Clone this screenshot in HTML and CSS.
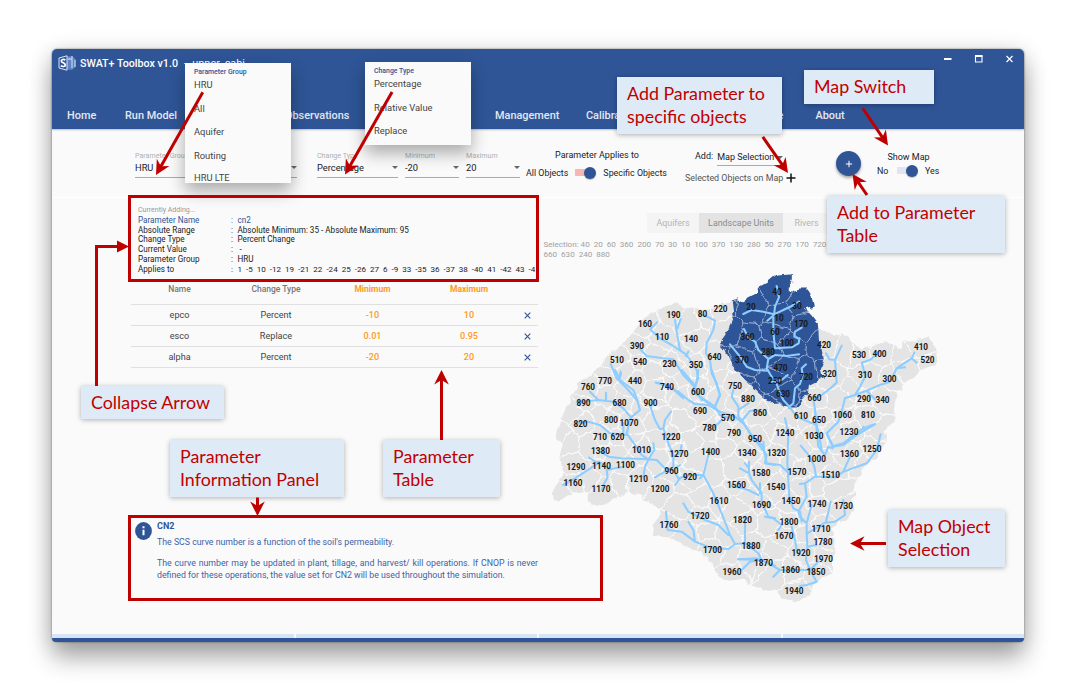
FILE: index.html
```html
<!DOCTYPE html>
<html lang="en">
<head>
<meta charset="utf-8">
<title>SWAT+ Toolbox v1.0</title>
<link rel="stylesheet" href="styles.css">
</head>
<body>
<div class="window">
  <header class="header">
    <div class="titlebar">
      <svg class="logo" width="19" height="16" viewBox="0 0 19 16">
        <path d="M9 1.5 14 1l3.5 3v8L14 15l-5-.5" fill="#5f83c4"/>
        <path d="M10 4h4v9M17 5v7M14 1v3" fill="none" stroke="#b9cbed" stroke-width="1.3"/>
        <path d="M1 3 9 .8v14.4L1 13Z" fill="#2f5597" stroke="#dbe5f7" stroke-width="1"/>
        <path d="M7.3 5.2C6 4 3.3 4.200 3.300 6c0 2 4 1.700 4 3.900 0 2-3 2-4.500.700" fill="none" stroke="#fff" stroke-width="1.700"/>
      </svg>
      <span class="app-name">SWAT+ Toolbox v1.0</span>
      <span class="project">-&nbsp; upper_cabi</span>
      <svg class="controls" width="68" height="12" viewBox="0 0 68 12" fill="none" stroke="#fff">
        <path d="M0 6h7.500" stroke-width="2"/>
        <path d="M31.500 3h6.500v6h-6.500z" stroke-width="1.100"/><path d="M31 3h7.500" stroke-width="2"/>
        <path d="m62.500 3 6 6m0-6-6 6" stroke-width="1.200"/>
      </svg>
    </div>
    <nav class="nav">
      <span class="n-home">Home</span><span class="n-run">Run Model</span><span class="n-obs">Observations</span><span class="n-man">Management</span><span class="n-cal">Calibra</span><span class="n-e">e</span><span>About</span>
    </nav>
  </header>

  <section class="toolbar">
    <div class="field f-group"><label>Parameter Group</label><div class="value">HRU<i class="caret"></i></div></div>
    <div class="field f-type"><label>Change Type</label><div class="value">Percentage<i class="caret"></i></div></div>
    <div class="field f-num"><label>Minimum</label><div class="value">-20<i class="caret"></i></div></div>
    <div class="field f-num"><label>Maximum</label><div class="value">20<i class="caret"></i></div></div>
    <div class="applies">
      <div>Parameter Applies to</div>
      <div class="switch-row"><span>All Objects</span><i class="switch pink"></i><span>Specific Objects</span></div>
    </div>
    <div class="adder">
      <div class="add-row"><span>Add:</span><div class="select">Map Selection<i class="caret"></i></div></div>
      <div class="sel-row"><span>Selected Objects on Map</span><svg width="10" height="10" viewBox="0 0 10 10"><path d="M5 .5v9M.5 5h9" stroke="#111" stroke-width="1.500"/></svg></div>
    </div>
    <div class="fab"><svg width="8" height="8" viewBox="0 0 8 8"><path d="M4 .8v6.400M.8 4h6.400" stroke="#fff"/></svg></div>
    <div class="show-map">
      <div>Show Map</div>
      <div class="switch-row"><span>No</span><i class="switch"></i><span>Yes</span></div>
    </div>
  </section>

  <main class="content">
    <div class="left">
      <section class="adding">
        <p class="hint">Currently Adding...</p>
        <dl>
          <dt class="blue">Parameter Name</dt><dd class="blue">cn2</dd>
          <dt>Absolute Range</dt><dd>Absolute Minimum: 35 - Absolute Maximum: 95</dd>
          <dt>Change Type</dt><dd>Percent Change</dd>
          <dt>Current Value</dt><dd>&nbsp;-</dd>
          <dt>Parameter Group</dt><dd>HRU</dd>
          <dt>Applies to</dt><dd class="ids">1 &nbsp;-5 &nbsp;10 &nbsp;-12 &nbsp;19 &nbsp;-21 &nbsp;22 &nbsp;-24 &nbsp;25 &nbsp;-26 &nbsp;27 &nbsp;6 &nbsp;-9 &nbsp;33 &nbsp;-35 &nbsp;36 &nbsp;-37 &nbsp;38 &nbsp;-40 &nbsp;41 &nbsp;-42 &nbsp;43 &nbsp;-4</dd>
        </dl>
      </section>
      <section class="table">
        <div class="row head"><span>Name</span><span>Change Type</span><b>Minimum</b><b>Maximum</b><span></span></div>
        <div class="row"><span>epco</span><span>Percent</span><b>-10</b><b>10</b><svg class="del" viewBox="0 0 7 7"><path d="m.7.7 5.600 5.600m0-5.600L.7 6.300"/></svg></div>
        <div class="row"><span>esco</span><span>Replace</span><b>0.01</b><b>0.95</b><svg class="del" viewBox="0 0 7 7"><path d="m.7.7 5.600 5.600m0-5.600L.7 6.300"/></svg></div>
        <div class="row"><span>alpha</span><span>Percent</span><b>-20</b><b>20</b><svg class="del" viewBox="0 0 7 7"><path d="m.7.7 5.600 5.600m0-5.600L.7 6.300"/></svg></div>
      </section>
      <section class="info">
        <svg width="17" height="18" viewBox="0 0 17 18"><ellipse cx="8.500" cy="9" rx="8.400" ry="9" fill="#2f5597"/><path d="M8.500 4.300v2M8.500 7.700v5.600" stroke="#fff" stroke-width="2"/></svg>
        <div class="info-text">
          <h2>CN2</h2>
          <p>The SCS curve number is a function of the soil's permeability.</p>
          <p class="just">The curve number may be updated in plant, tillage, and harvest/ kill operations. If CNOP is never</p>
          <p class="second">defined for these operations, the value set for CN2 will be used throughout the simulation.</p>
        </div>
      </section>
    </div>

    <div class="right">
      <div class="tabs"><span>Aquifers</span><span class="on">Landscape Units</span><span>Rivers</span></div>
      <p class="selection">Selection: 40 &nbsp;20 &nbsp;60 &nbsp;360 &nbsp;200 &nbsp;70 &nbsp;30 &nbsp;10 &nbsp;100 &nbsp;370 &nbsp;130 &nbsp;280 &nbsp;50 &nbsp;270 &nbsp;170 &nbsp;720<br>660 &nbsp;630 &nbsp;240 &nbsp;880</p>
      <svg class="map" width="400" height="345" viewBox="540 262 400 345">
        <defs>
          <clipPath id="basin-clip"><use href="#basin"/></clipPath>
          <clipPath id="upper-clip"><use href="#upper"/></clipPath>
          <filter id="rough" x="-2%" y="-2%" width="104%" height="104%">
            <feTurbulence type="fractalNoise" baseFrequency=".11" numOctaves="2" seed="4"/>
            <feDisplacementMap in="SourceGraphic" scale="7" xChannelSelector="R" yChannelSelector="G"/>
          </filter>
        </defs>
        <g filter="url(#rough)" transform="translate(.8 .6)">
          <path id="basin" class="land" d="M731 301 720 303 714 309 705 308 697 309 690 306 683 307 680 305 674 302 668 306 658 308 650 313 641 320 634 330 627 338 620 346 610 352 604 360 598 368 590 376 583 379 577 383 577 388 568 400 565 408 561 417 557 425 555 435 559 442 562 446 559 453 558 460 563 467 561 477 554 487 552 492 553 500 565 497 573 493 582 492 588 495 588 503 608 504 612 498 622 497 628 490 642 495 643 500 657 505 660 513 653 525 652 535 668 537 678 542 688 547 700 552 712 562 712 570 722 580 738 578 755 585 763 590 777 588 780 598 798 601 810 592 813 583 825 575 832 572 833 533 829 528 850 517 854 510 849 498 854 496 855 478 867 463 878 457 885 440 883 432 895 420 893 407 897 393 907 380 920 370 937 362 933 343 928 336 913 340 903 340 902 348 897 348 892 343 887 340 877 345 860 347 852 343 843 333 838 335 827 332 817 327 790 300Z"/>
          <g id="cells" class="cells" clip-path="url(#basin-clip)"></g>
          <path id="upper" class="upper" d="M731 301 737 299 742 301 757 293 757 287 768 281 775 275 791 274 791 280 787 287 787 292 800 288 806 288 811 295 813 306 803 309 810 313 817 322 818 337 820 350 824 358 820 368 822 378 808 385 807 393 795 407 787 407 777 401 768 402 753 388 742 378 730 363 725 350 718 342 728 328 733 317Z"/>
          <g id="upper-cells" class="cells upper-lines" clip-path="url(#upper-clip)"></g>
        </g>
        <g class="streams">
          <path transform="translate(700 260) scale(.33333)" d="M230 78 237 112 225 140 222 165M130 162 155 150 190 155 222 163 250 150 275 138 297 125M222 165 202 182M220 165V215L225 265M305 203 285 215 283 230 298 237 296 250 275 262 228 265M132 207 145 232 165 245 175 270 205 297M90 253 120 290 140 320 165 330 205 332M297 283 260 288 225 285 205 297 200 325 212 345 230 372 240 400 250 420 268 440 290 470 320 483 350 495M263 345 245 360 215 365M318 313 305 325 308 345 300 372 285 385 280 430 268 440M0 162 22 170 45 182 40 210 20 250 18 280 30 300 35 340 50 370 60 405 45 440M378 280 388 298 405 300 425 257M405 300 408 340 410 367 395 382 365 405 340 415 345 450 350 495 358 530 365 570M411 367 395 382M537 275 510 300 485 308 490 325 495 350 480 380 465 405 435 415 425 455 415 485 380 520 400 560M465 405 500 392 540 375 570 365 590 325 635 295 643 278M635 295 650 308M590 325 615 322M500 392 525 418M180 450 150 452 128 480M100 390 95 410 115 440 115 470 128 485 150 520 190 560M145 430 115 450M0 410 45 440 60 465 90 475M525 492 490 505 455 530 430 550 400 558"/>
          <path transform="translate(545 370) scale(.33333)" d="M335 38 370 50 400 65 430 90 450 102 490 105 525 125 570 140 600 165 615 190 650 235 665 255 660 280 690 285M410 0 445 40 450 70 490 100M460 0 455 35 450 55M500 0 525 75 510 110M505 175 530 150M210 0 225 30 265 60 275 85 285 120 258 142 245 190 270 225 290 255 310 268M228 10 222 30M135 65 160 90 205 95 235 115 258 142M183 68V90M95 97 160 90M90 162 130 155 165 165 195 190 245 195M235 160V190M155 237 190 260 230 265 310 268 335 270 360 295 385 300 400 325 440 315 475 315M325 220 328 240 310 268M295 320 300 290 310 268M132 263 160 280 140 292 90 325 55 345M235 290 185 300 188 322 175 345 170 360M160 275 195 297M330 322 360 305M390 345 405 325M313 100 330 150 345 178 355 175 360 150 378 125M355 175 372 225 385 255 385 290M410 225 405 250 385 260M405 285 385 300M493 235 488 265 475 315 505 370 530 430 555 495 570 522 600 520 640 550 650 570 690 588M465 325 475 315M415 400 430 425 480 450 520 465 550 495M363 425 368 480 410 485 450 515 500 535 550 537 570 522M430 455 445 480 450 515M600 440V520M580 568 650 570M590 600 615 575 650 570M585 295 612 310 620 330 650 370 650 395 670 440 690 445M612 275V310M600 280 612 295M560 347 610 360 640 375M645 340V370"/>
          <path transform="translate(710 400) scale(.33333)" d="M225 55 235 100 232 190 235 240 238 290 250 325 270 335 275 365M160 125 162 150 170 190 210 195 232 215M272 137 300 170 313 200 318 228 285 250 270 252M285 250 290 290 265 335 270 350 290 370 290 400 292 440 288 480 300 510 320 545 290 555 270 558M315 30 320 90 325 140 345 165 355 140 368 145M350 100 368 140 400 135 440 105 495 73M460 80V90M512 103 500 150 470 190 400 215 375 232 320 230M420 170 400 215M305 315 290 370M362 305 348 365M400 300 405 345 375 365 345 368 292 400M245 380 255 420 262 460M165 350 190 355 215 375 205 390M85 478 140 475 170 487 210 510 260 510 300 510M190 530 210 510M320 435 292 440M325 485 300 510"/>
          <path transform="translate(540 200) scale(.33333)" d="M352 367 330 388 360 415 395 435 440 465 470 510 475 535 463 560M405 360 410 395 420 450 440 465M422 357 412 385M445 455 437 468M300 447 320 468 370 475 400 478 430 525 463 560 485 600M212 492 230 535 265 570 290 600M242 515 235 540M347 548 385 555 430 595"/>
        </g>
        <g id="labels" class="labels"></g>
      </svg>
    </div>
  </main>
  <footer class="footer"><i></i><i></i><i></i><i></i></footer>

  <div class="menu menu-group"><h3>Parameter Group</h3><span>HRU</span><span>All</span><span>Aquifer</span><span>Routing</span><span>HRU LTE</span></div>
  <div class="menu menu-type"><h3>Change Type</h3><span>Percentage</span><span>Relative Value</span><span>Replace</span></div>
</div>

<div class="frame frame-adding"></div>
<div class="frame frame-info"></div>
<div class="callout c-specific">Add Parameter to<br>specific objects</div>
<div class="callout c-switch">Map Switch</div>
<div class="callout c-add">Add to Parameter<br>Table</div>
<div class="callout c-collapse">Collapse Arrow</div>
<div class="callout c-info">Parameter<br>Information Panel</div>
<div class="callout c-table">Parameter<br>Table</div>
<div class="callout c-map">Map Object<br>Selection</div>

<svg class="arrows" width="1086" height="692" viewBox="0 0 1086 692">
  <defs><path id="tip" d="M0 0-14.500-7.300-10 0-14.500 7.300Z"/></defs>
  <g transform="translate(156 175) rotate(119.500)"><path d="M-95 0H-9"/><use href="#tip"/></g>
  <g transform="translate(345 174.500) rotate(119.700)"><path d="M-95 0H-9"/><use href="#tip"/></g>
  <g transform="translate(788 173) rotate(55)"><path d="M-44 0H-9"/><use href="#tip"/></g>
  <g transform="translate(888 145.500) rotate(55.800)"><path d="M-45 0H-9"/><use href="#tip"/></g>
  <g transform="translate(852.500 174) rotate(-124.600)"><path d="M-25.500 0H-9"/><use href="#tip"/></g>
  <g transform="translate(441.500 370) rotate(-90)"><path d="M-70 0H-9"/><use href="#tip"/></g>
  <g transform="translate(257.500 516) rotate(90)"><path d="M-18.500 0H-9"/><use href="#tip"/></g>
  <g transform="translate(850 543.500) rotate(180)"><path d="M-36 0H-9"/><use href="#tip"/></g>
  <path d="M96.500 386V246.500H120" fill="none"/><path d="m129 246.500-12-6v12z" stroke="none"/>
</svg>
<script src="map.js"></script>
</body>
</html>
```
FILE: styles.css
```css
* { box-sizing: border-box; }
body { margin: 0; width: 1086px; height: 692px; overflow: hidden; background: #fff; font-family: Roboto, sans-serif; font-size: 9px; color: #222; position: relative; white-space: nowrap; }
p, h2, h3, dl, dd { margin: 0; }
.window { position: relative; margin: 49px 0 0 52px; width: 972px; height: 593px; display: flex; flex-direction: column; background: #fafafa; border-radius: 5px; box-shadow: 0 16px 24px rgba(0,0,0,.32), 0 2px 22px rgba(0,0,0,.15), 0 0 2px rgba(0,0,0,.5); }
.header { height: 80px; flex: none; background: #2f5597; border-radius: 5px 5px 0 0; color: #fff; display: flex; flex-direction: column; justify-content: space-between; box-shadow: 0 1px 2px rgba(0,0,0,.25); }
.titlebar { display: flex; align-items: center; height: 28px; padding: 0 12px 0 6px; font-size: 10.700px; font-weight: 500; }
.app-name { margin-left: 3px; width: 104px; }
.project { font-weight: 400; font-size: 10.800px; }
.titlebar .controls { margin: -8px 0 0 auto; overflow: visible; }
.logo { margin-top: -1px; }
.nav { display: flex; height: 27px; align-items: center; padding-left: 15px; font-size: 10.900px; font-weight: 500; color: #e2e8f2; }
.nav .n-home { width: 58px; } .nav .n-run { width: 160px; } .nav .n-obs { width: 210px; } .nav .n-man { width: 91px; } .nav .n-cal { width: 191.500px; } .nav .n-e { width: 38px; }

.toolbar { height: 69px; flex: none; display: flex; align-items: flex-start; padding: 20px 0 0 83px; border-bottom: 1px solid #fff; }
.field { flex: none; color: #222; }
.field label { display: block; height: 13px; line-height: 13px; font-size: 7.100px; color: #b0b0b0; }
.field .value { display: flex; justify-content: space-between; align-items: center; height: 16px; padding-bottom: 4px; border-bottom: 1px solid #aaa; font-size: 9.300px; }
.f-group { width: 162px; margin-right: 20px; } .f-type { width: 81px; margin-right: 7px; } .f-num { width: 54px; margin-right: 7px; }
.caret { border: 3px solid transparent; border-top-color: #666; border-bottom: 0; height: 0; }
.applies { width: 142px; flex: none; margin-left: -1px; text-align: center; line-height: 12px; }
.switch-row { display: flex; align-items: center; margin-top: 5px; gap: 7px; font-size: 8.900px; }
.switch { width: 21px; flex: none; height: 13px; display: flex; justify-content: flex-end; align-items: center; background: linear-gradient(#dfe5f3, #dfe5f3) 0 50% / 16px 7px no-repeat; border-radius: 4px; }
.switch.pink { background-image: linear-gradient(#f9b4b4, #f9b4b4); }
.switch::after { content: ""; width: 12px; height: 12px; border-radius: 50%; background: #2f5597; box-shadow: 0 1px 1px rgba(0,0,0,.25); }
.adder { margin-left: 17px; width: 113px; flex: none; display: flex; flex-direction: column; }
.add-row { display: flex; gap: 4px; height: 17px; padding-left: 10px; line-height: 15px; }
.select { display: flex; align-items: center; gap: 3px; border-bottom: 1px solid #aaa; color: #222; }
.sel-row { display: flex; align-items: center; gap: 3px; margin-top: 7px; color: #555; font-size: 8.900px; }
.sel-row svg { flex: none; }
.fab { margin: 2px 0 0 38px; width: 25px; flex: none; height: 25px; border-radius: 50%; background: #2f5597; display: flex; align-items: center; justify-content: center; box-shadow: 0 2px 3px rgba(0,0,0,.35); }
.show-map { margin: 2px 0 0 16px; width: 63px; text-align: center; line-height: 12px; }
.show-map .switch-row { margin-top: 1px; } .show-map .switch-row span:first-child { width: 13px; text-align: left; }

.content { flex: 1; display: flex; min-height: 0; }
.left { width: 412px; margin-left: 76px; flex: none; }
.adding { height: 82px; padding: 6px 0 0 10px; }
.hint { font-size: 7px; line-height: 12px; color: #999; }
.adding dl { display: grid; grid-template-columns: 93px 306px; line-height: 9.700px; font-size: 8.150px; margin-top: 0; }
.adding dd::before { content: ":"; display: inline-block; width: 6.500px; }
.adding .ids { font-size: 8.050px; }
.blue { color: #2f5597; }
.table { width: 407px; margin-left: 3px; }
.row { display: grid; grid-template-columns: 97px 96px 97px 96px 21px; align-items: center; justify-items: center; height: 21px; border-bottom: 1px solid #e0e0e0; color: #444; font-size: 9.100px; }
.row b { color: #ff9b22; font-weight: 500; }
.head { height: 25px; padding-bottom: 7px; font-weight: 500; color: #777; font-size: 8.500px; }
.head b { font-weight: 700; }
.del { width: 7px; height: 7px; stroke: #2f5597; stroke-width: 1.100; fill: none; }
.info { margin-top: 154px; padding-left: 7px; display: flex; gap: 5px; color: #3d62a6; line-height: 11.500px; font-size: 8.770px; }
.info svg { flex: none; }
.info h2 { font-size: 9px; line-height: 9px; font-weight: 700; color: #2f5597; margin-bottom: 6px; }
.info-text { width: 381px; flex: none; } .info .just { margin-top: 9.500px; text-align: justify; text-align-last: justify; }
.right { flex: none; width: 400px; padding-top: 15px; }
.tabs { display: flex; height: 20px; margin-left: 107px; color: #b5b5b5; line-height: 20px; width: 180px; font-size: 8.900px; }
.tabs span { background: #f4f4f4; flex: none; text-align: center; width: 52px; } .tabs span:last-child { width: 47px; } .tabs .on { background: #e3e3e3; color: #8b8b8b; width: 84px; }
.selection { margin: 7px 0 0 3.500px; line-height: 9.600px; font-size: 8.070px; color: #a0a0a0; }
.map { display: block; margin: 3px 0 0; }
.land { fill: #e4e4e4; } .upper { fill: #2f5597; }
.cells { fill: none; stroke: #fafafa; stroke-width: 1; } .upper-lines { stroke: #a9b9d8; stroke-width: .6; }
.streams { fill: none; stroke: #8dcdff; stroke-width: 6.200; stroke-linejoin: round; stroke-linecap: round; }
.labels { font: 700 8.200px Roboto, sans-serif; fill: #1a1a1a; text-anchor: middle; }
.footer { height: 8px; flex: none; border-bottom: 4px solid #2f5597; border-radius: 0 0 4px 4px; display: flex; gap: 2px; }
.footer i { flex: 1; background: #d6e4f5; }

.menu { position: absolute; width: 106px; background: #fafafa; padding: 4px 9px 0; display: flex; flex-direction: column; overflow: hidden; color: #444; font-size: 9.400px; box-shadow: 0 8px 16px rgba(0,0,0,.32); }
.menu h3 { font-size: 6.900px; line-height: 11px; font-weight: 500; color: #2f5597; height: 6px; flex: none; }
.menu span { height: 23.500px; line-height: 23.500px; flex: none; }
.menu span:last-child { line-height: 22px; height: 22px; }
.menu-group { left: 133px; top: 14px; height: 120px; } .menu-type { left: 313px; top: 13px; height: 83px; } .menu-type span:last-child { line-height: 24px; }
.frame { position: absolute; border: 3px solid #c00000; }
.frame-adding { left: 128px; top: 195px; width: 411px; height: 87px; } .frame-info { left: 128px; top: 515px; width: 475px; height: 86px; }
.callout { position: absolute; background: #deeaf6; color: #c00000; font: 17.850px/23px Lato, sans-serif; padding: 5px 10px; box-shadow: 0 1px 5px rgba(0,0,0,.3); }
.c-specific { left: 617px; top: 77px; width: 165px; height: 57px; }
.c-switch { left: 804px; top: 70px; width: 130px; height: 34px; }
.c-add { left: 827px; top: 196px; width: 178px; height: 57px; }
.c-collapse { left: 81px; top: 386px; width: 143px; height: 33px; }
.c-info { left: 170px; top: 440px; width: 174px; height: 57px; }
.c-table { left: 383px; top: 440px; width: 117px; height: 57px; }
.c-map { left: 888px; top: 510px; width: 117px; height: 57px; }
.arrows { position: absolute; left: 0; top: 0; stroke: #c00000; stroke-width: 3; fill: #c00000; }
.arrows use { stroke: none; }
```
FILE: map.js
```js
// Subbasin number followed by its label position.
const basins = `40 777 292,20 751 307,30 797 305.5,10 779 318,170 801 323.5,360 747.5 337,60 775 332,100 787 342.5,280 768 352,370 742 360,470 780.5 367.5,250 775 381,720 806 377,630 783 394,220 720.5 309,80 702.5 314,190 673.5 315,160 645 324,110 662 337,140 691 338.5,390 637 345.5,640 714.5 357,510 617 360,540 640 361.5,230 669.5 364,350 696 365,750 735 386,440 635 380.5,770 605 381,760 588 387,740 667 386.5,600 698 392,880 748 398.5,890 583.5 403,680 619.5 403,900 650.5 403,690 700 411,860 760 413,570 728 418,820 580.5 424,800 611 420,1070 629 423,780 709.5 427.5,790 734 432.5,710 600 437,620 617.5 437,1220 671 436.5,950 755 438.5,1380 600.5 451,1010 641.5 450,1270 679 454,1400 710.5 451.5,1340 747 453,1320 776.5 453,1240 785 433,1290 576 466.5,1140 601.5 466,1100 625.5 465,960 671.5 471,920 690 477,1580 761 473,1570 797 471.5,1160 573 483,1170 601 488.5,1210 638.5 478.5,1200 660 488.5,1560 736.5 485,1540 776 487,1610 719 501,1690 761.5 504.5,1450 791 500.5,1740 817 503.5,1730 843.5 506,1720 700 516,1760 669 524.5,1820 742.5 519.5,1800 789 521.5,1710 821 528.5,1670 784 536,1780 823 542,1700 712.5 549.5,1880 751 545.5,1920 801 553,1970 823.5 558.5,1870 763.5 563,1850 816 572,1960 732 571.5,1860 790.5 570,1940 794 590.5,420 824 344.5,320 829.5 374,530 859 355,400 879.5 353.5,410 921 347,520 927.5 359.5,310 865 375,300 889.5 378.5,290 864 398.5,340 882.5 399.5,660 814.5 398,610 801 416,650 819 419.5,1060 842.5 414.5,810 868 415,1230 849 432,1030 814 436,1360 849.5 454,1250 872 448.5,1000 816.5 459,1510 830.5 475`
  .split(',').map(s => s.split(' ').map(Number));

const extra = [[685,322],[655,352],[682,350],[727,330],[733,400],[681,376],[652,372],[625,370],[655,388],[683,396],[716,378],[716,398],[684,420],[655,418],[640,411],[600,412],[571,412],[570,440],[590,444],[630,440],[657,438],[655,460],[690,440],[695,462],[712,470],[725,445],[735,466],[722,428],[770,428],[770,462],[785,462],[801,446],[800,487],[815,487],[835,490],[745,498],[735,510],[700,497],[684,486],[680,505],[705,530],[685,535],[726,535],[730,555],[748,558],[775,550],[775,572],[770,522],[803,516],[808,535],[850,390],[845,352],[840,398],[905,357],[906,369],[880,428],[862,462],[840,440],[830,430],[790,418],[775,405],[620,480],[588,478],[565,490],[614,455],[560,430],[625,390],[605,396]];
// Third value: weight, which makes some subbasins larger than others.
const sites = basins.map(b => [b[1], b[2]]).concat(extra)
  .map(([x, y], i) => [x, y, (i * 37 % 23) * 5]);

// Clip a polygon to the part that belongs to site a rather than to site b.
function nearer(poly, a, b) {
  const side = p => (p[0] - (a[0] + b[0]) / 2) * (b[0] - a[0]) + (p[1] - (a[1] + b[1]) / 2) * (b[1] - a[1]) + (b[2] - a[2]) / 2;
  const out = [];
  poly.forEach((p, i) => {
    const q = poly[(i + 1) % poly.length], sp = side(p), sq = side(q);
    if (sp <= 0) out.push(p);
    if (sp * sq < 0) {
      const t = sp / (sp - sq);
      out.push([p[0] + (q[0] - p[0]) * t, p[1] + (q[1] - p[1]) * t]);
    }
  });
  return out;
}

const cellPath = sites.map((a, i) => {
  let poly = [[540, 262], [940, 262], [940, 607], [540, 607]];
  sites.forEach((b, j) => { if (i !== j) poly = nearer(poly, a, b); });
  return poly.length ? 'M' + poly.map(p => p[0].toFixed(1) + ' ' + p[1].toFixed(1)).join('L') + 'Z' : '';
}).join('');

for (const id of ['cells', 'upper-cells']) {
  document.getElementById(id).innerHTML = `<path d="${cellPath}"/>`;
}
document.getElementById('labels').innerHTML =
  basins.map(([n, x, y]) => `<text x="${x}" y="${y + 3}">${n}</text>`).join('');
```
